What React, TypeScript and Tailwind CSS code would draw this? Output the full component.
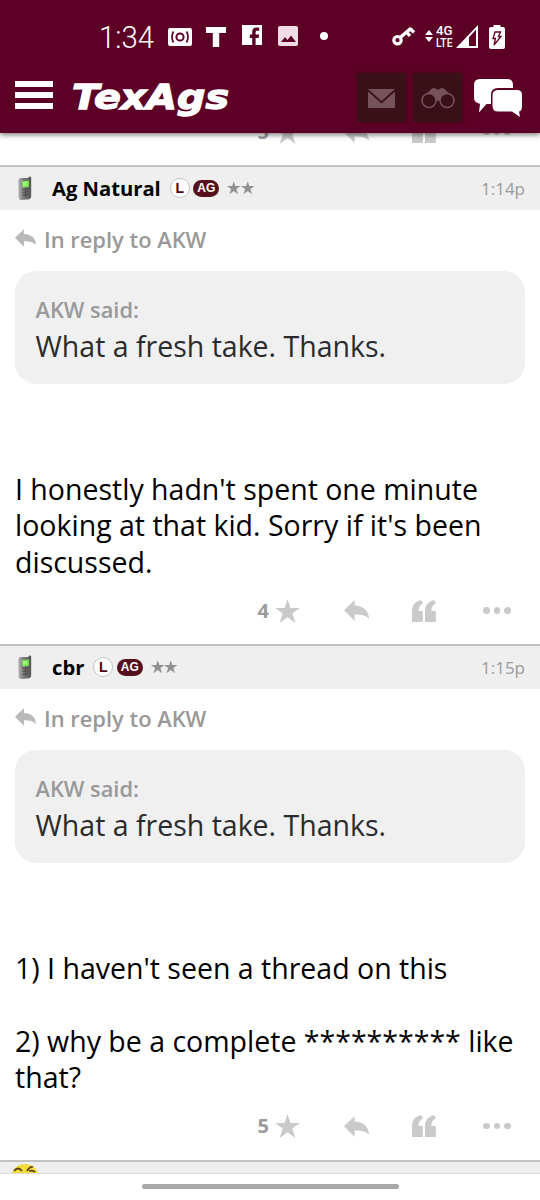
import React from 'react';

interface Post {
  author: string;
  time: string;
  stars: number;
  lines: string[];
}

const posts: Post[] = [
  {
    author: 'Ag Natural',
    time: '1:14p',
    stars: 4,
    lines: ["I honestly hadn't spent one minute", "looking at that kid. Sorry if it's been", 'discussed.'],
  },
  {
    author: 'cbr',
    time: '1:15p',
    stars: 5,
    lines: ["1) I haven't seen a thread on this", '', '2) why be a complete ********** like', 'that?'],
  },
];

const Star = ({ className }: { className: string }) => (
  <svg viewBox="0 0 24 23" className={className} fill="currentColor">
    <path d="M12 0l2.8 8.6H24l-7.4 5.3L19.6 23 12 17.4 4.4 23l3-9.1L0 8.6h9.2z" />
  </svg>
);

const Reply = ({ className }: { className: string }) => (
  <svg viewBox="0 0 25 21" className={className} fill="currentColor">
    <path d="M0 10.2L10.6 0v5.6C19 5.8 24.6 10 25 18.8c-3-3.6-8-4.6-14.4-4.4V21z" />
  </svg>
);

const Quotes = () => (
  <svg viewBox="0 0 24 22" className="h-[22px] w-6" fill="currentColor">
    <path d="M8.8 0l2.4 3.2C8.2 4.6 6.6 7 6.6 11h4.2v11H0V11.5C0 5.5 3 1.6 8.8 0z" />
    <path d="M21.8 0l2.2 3.2c-3 1.4-4.6 3.8-4.6 7.8h4.4v11H13V11.5C13 5.5 16 1.6 21.8 0z" />
  </svg>
);

const Phone = () => (
  <svg viewBox="0 0 17 26" className="h-[25px] w-[17px]">
    <defs>
      <linearGradient id="shell" x1="0" x2="1">
        <stop offset="0" stopColor="#b4b4b4" />
        <stop offset="0.4" stopColor="#7d7d7d" />
        <stop offset="1" stopColor="#555" />
      </linearGradient>
    </defs>
    <path d="M3 2h8.5V1.4Q12 .6 13 .6t1.4.8V21q-.2 2.5-2 3.2L4 25q-2.5 0-2.6-2.4L1 5q0-2.5 2-3z" fill="url(#shell)" />
    <path d="M5 5.5l7-.8v6.6l-6.7.6z" fill="#79ec50" />
    <path d="M6 6.6l4-.4v3.5l-4 .3z" fill="#9cff72" />
    <path d="M5 14l7.5-.8M5.3 17l6.8-.7M5.3 20l6.8-.7M8.5 14v8" stroke="#4a4a4a" strokeWidth="1" />
  </svg>
);

const Actions = ({ count }: { count: number }) => (
  <div className="flex h-[34px] items-center pl-[257.5px] text-[#cacaca]">
    <span className="w-[17px] text-[20px] leading-none font-bold text-[#9b9b9b]">{count}</span>
    <Star className="h-[24px] w-[25px]" />
    <Reply className="ml-[44px] h-[21px] w-[25px]" />
    <div className="ml-[43.5px]">
      <Quotes />
    </div>
    <div className="ml-[47px] flex gap-1">
      <i className="size-[6.5px] rounded-full bg-current" />
      <i className="size-[6.5px] rounded-full bg-current" />
      <i className="size-[6.5px] rounded-full bg-current" />
    </div>
  </div>
);

const StatusBar = () => (
  <div className="flex h-[73px] items-center text-white">
    <svg
      viewBox="0 0 56 30"
      className="mr-[13px] ml-[99px] h-[30px] w-[56px] overflow-visible"
      fill="currentColor"
      fontFamily="Roboto"
      fontWeight="300"
    >
      <text x="0" y="26" fontSize="31" textLength="55" lengthAdjust="spacingAndGlyphs">1:34</text>
    </svg>
    <svg viewBox="0 0 24 18" className="h-[18px] w-6">
      <rect width="24" height="18" rx="2" fill="#fff" />
      <circle cx="12" cy="9" r="3.6" fill="none" stroke="#5d0025" strokeWidth="2" />
      <path d="M5.5 3.5q-3 5.5 0 11M18.5 3.5q3 5.5 0 11" fill="none" stroke="#5d0025" strokeWidth="1.7" />
    </svg>
    <svg viewBox="0 0 20 20" className="ml-[14px] size-5" fill="#fff">
      <path d="M0 0h20v6h-6.8v14H6.8V6H0z" />
    </svg>
    <svg viewBox="0 0 20 20" className="mb-1 ml-4 size-5">
      <path fill="#fff" d="M0 0h20v20H0z" />
      <path fill="#5d0025" d="M10.2 20v-7H7.8V9.4h2.4V7c0-3 1.7-4.4 4.3-4.4h2.7v3.2h-1.8c-1.4 0-1.8.6-1.8 1.7v1.9h3.5l-.5 3.6h-3v7z" />
    </svg>
    <svg viewBox="0 0 20 20" className="mb-0.5 ml-4 size-5">
      <rect width="20" height="20" rx="2" fill="#f1dbe5" />
      <path fill="#5d0025" d="M3 16l4-5 2.5 3L13 9.5l5 6.5z" />
    </svg>
    <i className="mb-px ml-[22px] size-2 rounded-full bg-white" />
    <svg viewBox="0 0 24 20" className="mb-0.5 ml-[64px] h-5 w-6">
      <circle cx="5.5" cy="14.2" r="3.7" fill="none" stroke="#fff" strokeWidth="3.2" />
      <path d="M8.5 11.3L19 2.2M14.5 6l3.5 4M18 2.6l4 3.8" fill="none" stroke="#fff" strokeWidth="3.4" />
    </svg>
    <svg viewBox="0 0 8 12" className="mb-0.5 ml-[9px] h-3 w-2" fill="#fff">
      <path d="M4 0l4 5H0zM4 12l4-5H0z" />
    </svg>
    <svg
      viewBox="0 0 18 24"
      className="ml-[2px] h-6 w-[18px] overflow-visible"
      fill="#fff"
      fontFamily="Roboto"
      fontWeight="500"
    >
      <text x="1" y="10" fontSize="13.5" textLength="16.5" lengthAdjust="spacingAndGlyphs">4G</text>
      <text x="1" y="22" fontSize="13.5" textLength="16.5" lengthAdjust="spacingAndGlyphs">LTE</text>
    </svg>
    <svg viewBox="0 0 22 23" className="mb-px ml-[3px] h-[23px] w-[22px]">
      <path d="M0 23L22 0v23z" fill="#fff" />
      <path d="M13 12.2l7-7.4V21h-7z" fill="#5d0025" />
    </svg>
    <svg viewBox="0 0 16 24" className="ml-[11px] h-6 w-4">
      <path d="M4.5 0h7v2H14q2 0 2 2v18q0 2-2 2H2q-2 0-2-2V4q0-2 2-2h2.5z" fill="#fff" />
      <path d="M6 7h5.5l-2 4.5H12L5 20l1.5-6.5H4z" fill="none" stroke="#5d0025" strokeWidth="1.3" />
    </svg>
  </div>
);

const NavBar = () => (
  <div className="flex h-[60px]">
    <div className="mt-2 ml-[15px] flex w-[38px] flex-col gap-[5px]">
      <i className="h-[6px] bg-white" />
      <i className="h-[6px] bg-white" />
      <i className="h-[6px] bg-white" />
    </div>
    <svg viewBox="0 0 162 50" className="ml-[17px] h-[50px] w-[162px] overflow-visible">
      <text
        x="2"
        y="35.5"
        fontFamily="DejaVu Sans"
        fontSize="34.5"
        fontWeight="700"
        fontStyle="italic"
        fill="#fff"
        stroke="#fff"
        strokeWidth="1.3"
        textLength="157"
        lengthAdjust="spacingAndGlyphs"
      >
        TexAgs
      </text>
    </svg>
    <div className="ml-[125px] flex gap-[7px]">
      <div className="flex size-[49px] items-center justify-center rounded-[3px] bg-[#3a1018] shadow-[0_0_3px_#3a1018]">
        <svg viewBox="0 0 27 19" className="mt-0.5 h-[19px] w-[27px]" fill="#76525a">
          <path d="M0 0h27L13.5 12zM0 2.5l13.5 12L27 2.5V19H0z" />
        </svg>
      </div>
      <div className="flex size-[49px] items-center justify-center rounded-[3px] bg-[#3a1018] shadow-[0_0_3px_#3a1018]">
        <svg viewBox="0 0 34 22" className="h-[22px] w-[34px]">
          <path d="M3 9L11 1.5q3-1.5 5 1h2q2-2.5 5-1L31 9l-9 2-5 3-5-3z" fill="#76525a" />
          <circle cx="8" cy="13.5" r="7" fill="#3a1018" stroke="#76525a" strokeWidth="1.6" />
          <circle cx="26" cy="13.5" r="7" fill="#3a1018" stroke="#76525a" strokeWidth="1.6" />
        </svg>
      </div>
    </div>
    <svg viewBox="0 0 48 39" className="mt-[5px] ml-3 h-[39px] w-12" fill="#fff">
      <path d="M6 1h27q6 0 6 6v3H24q-7 0-7 7v9h-4.5L5 34.5l1-8.7q-6-.8-6-6V7q0-6 6-6z" />
      <path d="M24 12h19q5 0 5 5v11q0 5-3 5.5l1 5.5-8-5.5H24q-5.5 0-5.5-5.5V17.5Q18.5 12 24 12z" />
    </svg>
  </div>
);

const PostItem = ({ post }: { post: Post }) => (
  <article>
    <div className="flex h-[45px] items-center border-t-2 border-[#c2c2c2] bg-[#efefef] pr-[15px] pb-px pl-[17px]">
      <Phone />
      <span className="ml-[18px] text-[20.2px] leading-none font-bold text-black">{post.author}</span>
      <span className="ml-[9px] flex size-5 items-center justify-center rounded-full border border-[#c4c4c4] bg-white font-['Liberation_Sans'] text-[14px] leading-none font-bold text-[#500010]">
        L
      </span>
      <span className="ml-[3.5px] flex h-[17px] w-[26px] items-center justify-center rounded-full bg-[#55101c] font-['Liberation_Sans'] text-[12px] leading-none font-bold text-white">
        AG
      </span>
      <Star className="ml-2 size-[13.5px] text-[#919191]" />
      <Star className="size-[13.5px] text-[#919191]" />
      <span className="ml-auto text-[17px] leading-none text-[#9b9b9b]">{post.time}</span>
    </div>
    <div className="px-[15px]">
      <div className="flex h-[61px] items-center pb-[2px] text-[#999]">
        <Reply className="mb-1 h-[18px] w-[21px] text-[#b9b9b9]" />
        <span className="ml-2 text-[21.9px] leading-none font-semibold">In reply to AKW</span>
      </div>
      <div className="h-[113px] rounded-[21px] bg-[#f0f0f0] px-[20.5px] pt-[21.5px]">
        <div className="text-[21.8px] leading-[34px] font-semibold text-[#999]">AKW said:</div>
        <div className="pt-px text-[28.5px] leading-[37px] text-[#2b2b2b]">What a fresh take. Thanks.</div>
      </div>
      <div className="mt-[86.5px] text-[28.5px] leading-[36.5px] whitespace-nowrap text-black">
        {post.lines.map((line, i) => (
          <div key={i} className="min-h-[36.5px]">{line}</div>
        ))}
      </div>
    </div>
    <div className="pt-[13.5px] pb-[16.5px]">
      <Actions count={post.stars} />
    </div>
  </article>
);

const App = () => {
  return (
    <div className="flex h-[1200px] w-[540px] flex-col overflow-hidden bg-white font-['Open_Sans',sans-serif]">
      <header className="relative z-10 h-[133px] shrink-0 bg-[#5d0025] shadow-[0_2px_5px_rgba(0,0,0,0.5)]">
        <StatusBar />
        <NavBar />
      </header>
      <main className="-mt-[18px] h-[1058px] shrink-0 overflow-hidden">
        <div className="pb-4">
          <Actions count={5} />
        </div>
        {posts.map((post) => (
          <PostItem key={post.author} post={post} />
        ))}
        <div className="border-t-2 border-[#c2c2c2] bg-[#efefef] pt-[2px] pl-[11px]">
          <svg viewBox="0 0 28 28" className="size-7">
            <circle cx="14" cy="14" r="14" fill="#f3dc3c" />
            <path d="M3 7q4-5 8 0M16 7q3-5 6-4M18 7q4-1 6 1" fill="none" stroke="#5b4210" strokeWidth="1.8" />
          </svg>
        </div>
      </main>
      <footer className="flex flex-1 justify-center border-t border-[#dcdcdc] bg-white pt-[10px]">
        <div className="h-[5px] w-[257px] rounded-full bg-[#a8a8a8]" />
      </footer>
    </div>
  );
};

export default App;
